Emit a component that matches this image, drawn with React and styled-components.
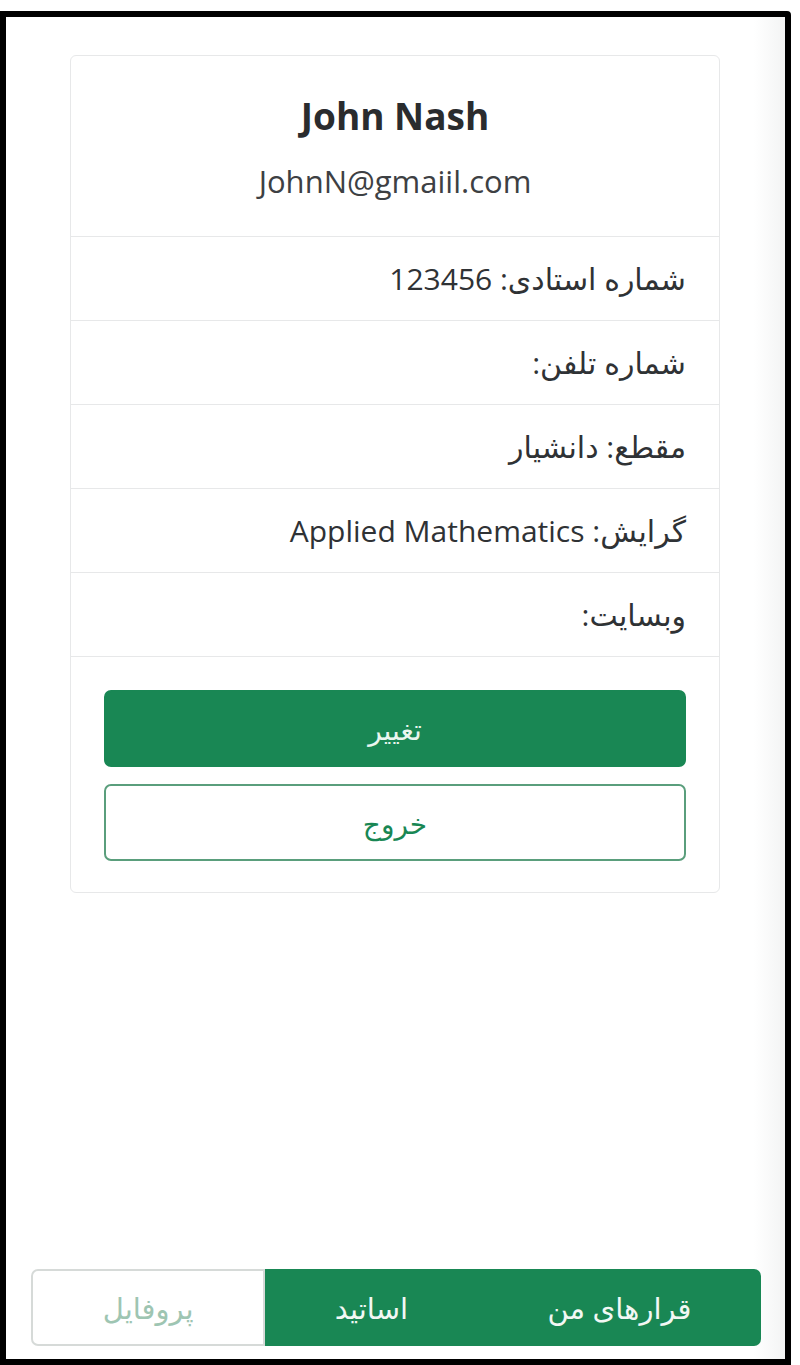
import React from "react";
import styled, { createGlobalStyle } from "styled-components";

const Global = createGlobalStyle`
  html, body { margin: 0; padding: 0; background: #ffffff; }
  body { font-family: "Open Sans", "DejaVu Sans", sans-serif; color: #212529; }
  * { box-sizing: border-box; }
`;

const Page = styled.div`
  width: 800px;
  height: 1365px;
  padding-top: 11px;
  background: #ffffff;
`;

const Frame = styled.div`
  width: 791px;
  height: 1354px;
  border: 6px solid #000;
  border-radius: 0 4px 0 0;
  background: linear-gradient(to right, #ffffff 0, #ffffff 96%, #f3f4f4 100%);
  display: flex;
  flex-direction: column;
  direction: rtl;
`;

const Card = styled.div`
  margin: 38px 0 0 64px;
  margin-right: auto;
  width: 650px;
  border: 1px solid #e7e8e9;
  border-radius: 6px;
  background: #fff;
`;

const Header = styled.div`
  padding: 36px 20px 33px;
  text-align: center;
  border-bottom: 1px solid #e7e8e9;
  direction: ltr;
`;

const Name = styled.div`
  font-size: 37px;
  font-weight: 700;
  line-height: 48px;
  color: #2a2c2e;
`;

const Email = styled.div`
  margin-top: 19px;
  font-size: 31px;
  line-height: 44px;
  color: #3d4043;
`;

const Row = styled.div`
  height: 84px;
  display: flex;
  align-items: center;
  padding: 0 33px;
  font-size: 30px;
  color: #2f3235;
  border-bottom: 1px solid #e7e8e9;
`;

const Actions = styled.div`
  padding: 33px 33px 31px;
  display: flex;
  flex-direction: column;
  gap: 17px;
`;

const Button = styled.button`
  height: 77px;
  width: 100%;
  border-radius: 7px;
  font-family: inherit;
  font-size: 28px;
  border: 2px solid #198754;
  background: ${(p) => (p.$outline ? "#fff" : "#198754")};
  color: ${(p) => (p.$outline ? "#198754" : "#eaf6ef")};
  border-color: ${(p) => (p.$outline ? "#5a9e7c" : "#198754")};
`;

const Nav = styled.div`
  margin: auto 24px 13px 25px;
  height: 77px;
  display: flex;
  direction: rtl;
`;

const Tab = styled.div`
  flex: 1 1 auto;
  display: flex;
  align-items: center;
  justify-content: center;
  font-size: 29px;
  background: ${(p) => (p.$active ? "#fff" : "#198754")};
  color: ${(p) => (p.$active ? "#9ec5b2" : "#f2f8f4")};
  border: ${(p) => (p.$active ? "2px solid #d6dad8" : "none")};
  border-radius: ${(p) => (p.$first ? "0 7px 7px 0" : p.$last ? "7px 0 0 7px" : "0")};
`;

export default function App() {
  return (
    <Page>
      <Global />
      <Frame>
        <Card>
          <Header>
            <Name>John Nash</Name>
            <Email>JohnN@gmaiil.com</Email>
          </Header>
          <Row>شماره استادی: 123456</Row>
          <Row>شماره تلفن:</Row>
          <Row>مقطع: دانشیار</Row>
          <Row>گرایش: Applied Mathematics</Row>
          <Row>وبسایت:</Row>
          <Actions>
            <Button>تغییر</Button>
            <Button $outline>خروج</Button>
          </Actions>
        </Card>
        <Nav>
          <Tab $first>قرارهای من</Tab>
          <Tab>اساتید</Tab>
          <Tab $last $active>پروفایل</Tab>
        </Nav>
      </Frame>
    </Page>
  );
}
